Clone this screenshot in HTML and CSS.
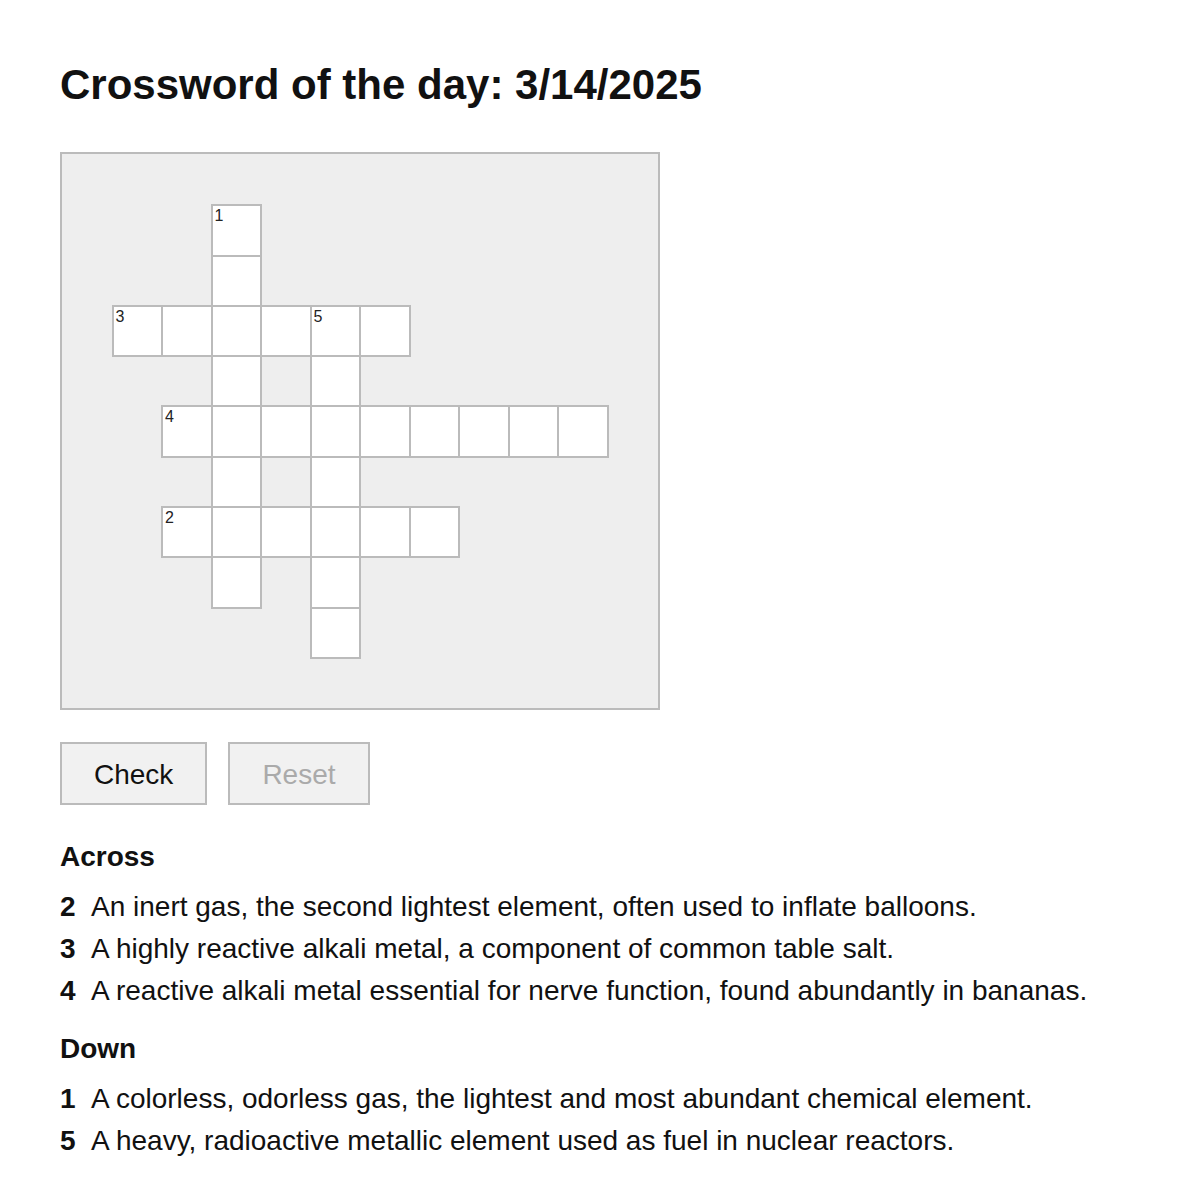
FILE: index.html
```html
<!DOCTYPE html>
<html lang="en">
<head>
<meta charset="utf-8">
<title>Crossword of the day</title>
<link rel="stylesheet" href="styles.css">
</head>
<body>
<main class="page">
  <h1 class="title">Crossword of the day: 3/14/2025</h1>

  <div class="board">
    <div class="grid">
      <!-- 1 down: HYDROGEN (col 3, rows 1-8) -->
      <div class="cell" style="grid-row:2;grid-column:4"><span class="num">1</span></div>
      <div class="cell" style="grid-row:3;grid-column:4"></div>
      <!-- 3 across: SODIUM (row 3, cols 1-6) -->
      <div class="cell" style="grid-row:4;grid-column:2"><span class="num">3</span></div>
      <div class="cell" style="grid-row:4;grid-column:3"></div>
      <div class="cell" style="grid-row:4;grid-column:4"></div>
      <div class="cell" style="grid-row:4;grid-column:5"></div>
      <div class="cell" style="grid-row:4;grid-column:6"><span class="num">5</span></div>
      <div class="cell" style="grid-row:4;grid-column:7"></div>
      <div class="cell" style="grid-row:5;grid-column:4"></div>
      <div class="cell" style="grid-row:5;grid-column:6"></div>
      <!-- 4 across: POTASSIUM (row 5, cols 2-10) -->
      <div class="cell" style="grid-row:6;grid-column:3"><span class="num">4</span></div>
      <div class="cell" style="grid-row:6;grid-column:4"></div>
      <div class="cell" style="grid-row:6;grid-column:5"></div>
      <div class="cell" style="grid-row:6;grid-column:6"></div>
      <div class="cell" style="grid-row:6;grid-column:7"></div>
      <div class="cell" style="grid-row:6;grid-column:8"></div>
      <div class="cell" style="grid-row:6;grid-column:9"></div>
      <div class="cell" style="grid-row:6;grid-column:10"></div>
      <div class="cell" style="grid-row:6;grid-column:11"></div>
      <div class="cell" style="grid-row:7;grid-column:4"></div>
      <div class="cell" style="grid-row:7;grid-column:6"></div>
      <!-- 2 across: HELIUM (row 7, cols 2-7) -->
      <div class="cell" style="grid-row:8;grid-column:3"><span class="num">2</span></div>
      <div class="cell" style="grid-row:8;grid-column:4"></div>
      <div class="cell" style="grid-row:8;grid-column:5"></div>
      <div class="cell" style="grid-row:8;grid-column:6"></div>
      <div class="cell" style="grid-row:8;grid-column:7"></div>
      <div class="cell" style="grid-row:8;grid-column:8"></div>
      <div class="cell" style="grid-row:9;grid-column:4"></div>
      <div class="cell" style="grid-row:9;grid-column:6"></div>
      <!-- 5 down: URANIUM (col 5, rows 3-9) -->
      <div class="cell" style="grid-row:10;grid-column:6"></div>
    </div>
  </div>

  <div class="actions">
    <button class="btn" type="button">Check</button>
    <button class="btn" type="button" disabled>Reset</button>
  </div>

  <section class="clues">
    <h2 class="clues-title">Across</h2>
    <ul class="clue-list">
      <li class="clue"><span class="clue-num">2</span>An inert gas, the second lightest element, often used to inflate balloons.</li>
      <li class="clue"><span class="clue-num">3</span>A highly reactive alkali metal, a component of common table salt.</li>
      <li class="clue"><span class="clue-num">4</span>A reactive alkali metal essential for nerve function, found abundantly in bananas.</li>
    </ul>
  </section>

  <section class="clues clues-down">
    <h2 class="clues-title">Down</h2>
    <ul class="clue-list">
      <li class="clue"><span class="clue-num">1</span>A colorless, odorless gas, the lightest and most abundant chemical element.</li>
      <li class="clue"><span class="clue-num">5</span>A heavy, radioactive metallic element used as fuel in nuclear reactors.</li>
    </ul>
  </section>
</main>
</body>
</html>
```

FILE: styles.css
```css
* {
  box-sizing: border-box;
}

html, body {
  margin: 0;
  padding: 0;
  background: #ffffff;
}

body {
  font-family: "Liberation Sans", Arial, sans-serif;
  color: #111111;
}

.page {
  padding: 61px 60px 0 60px;
}

.title {
  margin: 0 0 43px 0;
  font-size: 42px;
  line-height: 48px;
  font-weight: 700;
  color: #111111;
}

.board {
  width: 600px;
  height: 558px;
  border: 2px solid #bbbbbb;
  background: #eeeeee;
}

.grid {
  display: grid;
  grid-template-columns: repeat(12, 49.5px);
  grid-template-rows: repeat(11, 50.3px);
}

.cell {
  width: calc(100% + 2px);
  height: calc(100% + 2px);
  border: 2px solid #bbbbbb;
  background: #ffffff;
}

.num {
  display: block;
  padding: 1px 0 0 2px;
  font-size: 16px;
  line-height: 18px;
  color: #222222;
}

.actions {
  display: flex;
  gap: 21px;
  margin-top: 32px;
}

.btn {
  height: 63px;
  padding: 3px 32px 0 32px;
  border: 2px solid #bbbbbb;
  background: #f1f1f1;
  font-family: "Liberation Sans", Arial, sans-serif;
  font-size: 28px;
  color: #111111;
  border-radius: 0;
}

.btn:disabled {
  color: #aaaaaa;
}

.clues {
  margin-top: 34px;
}

.clues-down {
  margin-top: 19px;
}

.clues-title {
  margin: 0 0 11px 0;
  font-size: 28px;
  line-height: 36px;
  font-weight: 700;
}

.clue-list {
  list-style: none;
  margin: 0;
  padding: 0;
}

.clue {
  font-size: 28px;
  line-height: 42px;
}

.clue-num {
  display: inline-block;
  width: 31px;
  font-weight: 700;
}
```
